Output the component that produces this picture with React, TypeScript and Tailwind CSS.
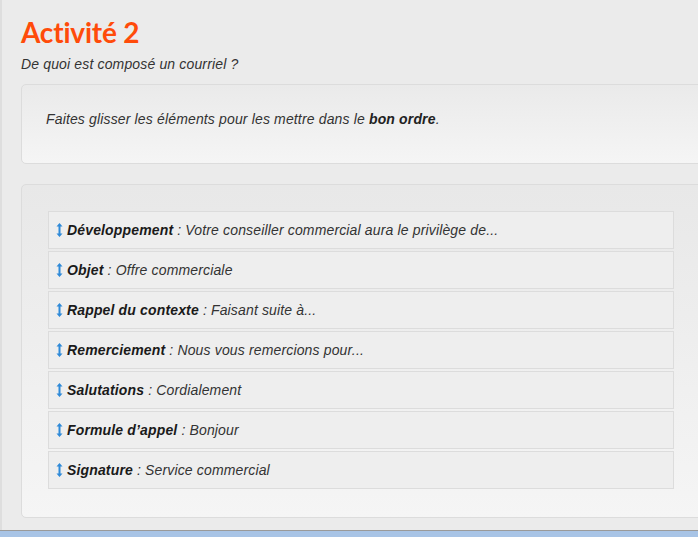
const items = [
  { label: "Développement", text: "Votre conseiller commercial aura le privilège de..." },
  { label: "Objet", text: "Offre commerciale" },
  { label: "Rappel du contexte", text: "Faisant suite à..." },
  { label: "Remerciement", text: "Nous vous remercions pour..." },
  { label: "Salutations", text: "Cordialement" },
  { label: "Formule d’appel", text: "Bonjour" },
  { label: "Signature", text: "Service commercial" },
];

function DragIcon() {
  return (
    <svg width="7" height="16" viewBox="0 0 7 16" className="shrink-0">
      <path d="M3.5 1 L6.5 4.5 H4.5 V11.5 H6.5 L3.5 15 L0.5 11.5 H2.5 V4.5 H0.5 Z" fill="#2f8ad8" />
    </svg>
  );
}

export default function App() {
  return (
    <div className="h-[537px] w-[698px] overflow-hidden flex flex-col font-['Liberation_Sans',Arial,sans-serif]">
      <div className="flex-1 bg-[#ebebeb] border-l-2 border-[#dedede] pl-[19px] pt-[14px] overflow-hidden">
        <h1 className="text-[28px] leading-[36px] font-bold text-[#ff4b0a] font-['Lato',sans-serif] tracking-[-0.2px]">
          Activité 2
        </h1>
        <p className="mt-[6px] text-[14px] leading-[16px] italic text-[#333] tracking-[0.15px]">
          De quoi est composé un courriel ?
        </p>
        <div className="mt-[12px] h-[80px] -mr-[10px] rounded-[5px] border border-[#dcdcdc] bg-gradient-to-b from-[#eaeaea] to-[#f5f5f5] pl-[24px] pt-[26px]">
          <p className="text-[14px] leading-[16px] italic text-[#333] tracking-[0.15px]">
            Faites glisser les éléments pour les mettre dans le <b className="text-[#222]">bon ordre</b>.
          </p>
        </div>
        <div className="mt-[20px] h-[334px] -mr-[10px] rounded-[5px] border border-[#dcdcdc] bg-gradient-to-b from-[#e8e8e8] to-[#f5f5f5] pl-[26px] pt-[26px]">
          <div className="w-[626px] flex flex-col gap-[2px]">
            {items.map((it) => (
              <div
                key={it.label}
                className="h-[38px] border border-[#dcdcdc] bg-[#eeeeee] flex items-center gap-[4px] pl-[7px] text-[14px] italic text-[#333] tracking-[0.15px]"
              >
                <DragIcon />
                <span>
                  <b className="text-[#1a1a1a]">{it.label}</b> : {it.text}
                </span>
              </div>
            ))}
          </div>
        </div>
      </div>
      <div className="h-[7px] border-t border-[#9a9a9a] bg-[#a8c4e6]" />
    </div>
  );
}
